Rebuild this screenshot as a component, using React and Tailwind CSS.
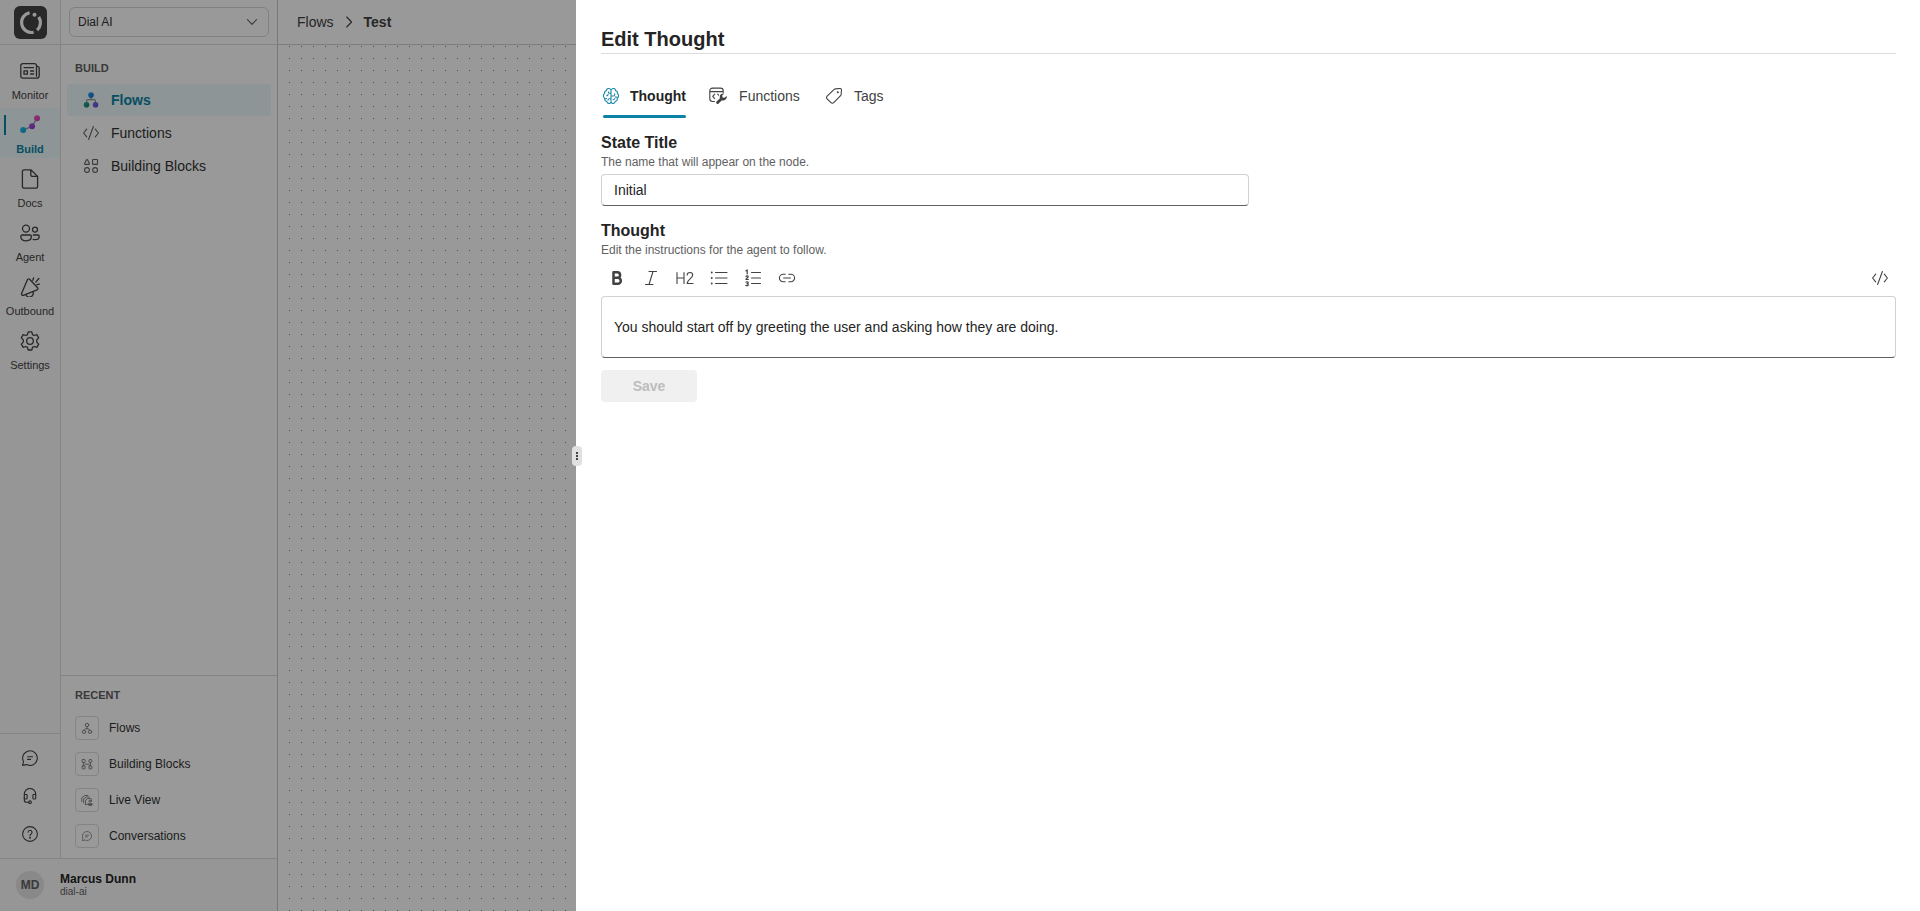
import React from "react";

function Icon({ size = "size-5", box = 20, width = 1.3, children, className = "" }) {
  return (
    <svg
      viewBox={`0 0 ${box} ${box}`}
      className={`${size} shrink-0 ${className}`}
      fill="none"
      stroke="currentColor"
      strokeWidth={width}
      strokeLinecap="round"
      strokeLinejoin="round"
      aria-hidden="true"
    >
      {children}
    </svg>
  );
}

const Logo = () => (
  <svg viewBox="0 0 33 33" className="size-[33px]" aria-hidden="true">
    <rect width="33" height="33" rx="6" fill="#444" />
    <g fill="none" stroke="#fff" strokeWidth="3.2">
      <path d="M15.600 6.700A10 10 0 0 0 19.600 26.300" />
      <path d="M24.700 11A10 10 0 0 1 23.100 24.100" />
    </g>
    <circle cx="20.500" cy="8.700" r="2" fill="#fff" />
  </svg>
);

const MonitorIcon = () => (
  <Icon>
    <path d="M16.5 15.2V4.6A2 2 0 0 0 14.5 2.6H2.8A2 2 0 0 0 .8 4.6v10.600a2 2 0 0 0 2 2H17a2.200 2.200 0 0 0 2.200-2.200V7a1.700 1.700 0 0 0-1.500-1.700" />
    <path d="M4 6.600h9.500M10.600 10h3M10.600 13h3" />
    <rect x="4" y="9.800" width="3.400" height="3.400" />
  </Icon>
);

const BuildIcon = () => (
  <svg viewBox="0 0 20 20" className="size-5" aria-hidden="true">
    <defs>
      <linearGradient id="bd1" x1="0" y1="0" x2="1" y2="1"><stop stopColor="#2cc0f0" /><stop offset="1" stopColor="#0a9fd0" /></linearGradient>
      <linearGradient id="bd2" x1="0" y1="0" x2="1" y2="1"><stop stopColor="#b455e0" /><stop offset="1" stopColor="#8038c8" /></linearGradient>
      <linearGradient id="bd3" x1="0" y1="0" x2="1" y2="1"><stop stopColor="#f05ab4" /><stop offset="1" stopColor="#cc3fbb" /></linearGradient>
    </defs>
    <path d="M3 15.200 12 11.200 17 3.300" fill="none" stroke="#8c8c9c" strokeWidth="1.200" />
    <circle cx="3.100" cy="15.100" r="3" fill="url(#bd1)" />
    <circle cx="12" cy="11.200" r="3" fill="url(#bd2)" />
    <circle cx="17" cy="3.200" r="3" fill="url(#bd3)" />
  </svg>
);

const DocsIcon = () => (
  <Icon>
    <path d="M10.800.8H4.200a1.800 1.800 0 0 0-1.800 1.800v14.800a1.800 1.800 0 0 0 1.800 1.800h11.600a1.800 1.800 0 0 0 1.800-1.800V7.400ZM10.800.9v4.900a1.600 1.600 0 0 0 1.600 1.600h5" />
  </Icon>
);

const AgentIcon = () => (
  <Icon>
    <circle cx="6" cy="5.600" r="3.500" />
    <circle cx="15" cy="6.600" r="2.500" />
    <path d="M2.300 12h7.500a1.600 1.600 0 0 1 1.600 1.600c0 2.600-2 4.200-5.300 4.200S.8 16.200.8 13.600A1.600 1.600 0 0 1 2.300 12Z" />
    <path d="M13.300 12h4.500a1.400 1.400 0 0 1 1.400 1.400c0 2-1.700 3.200-4.200 3.200-.7 0-1.300-.1-1.800-.3" />
  </Icon>
);

const OutboundIcon = () => (
  <Icon>
    <path d="M9.600 2.200 17.600 10.700a1.300 1.300 0 0 1-.5 2.100L3.300 18.300a1.300 1.300 0 0 1-1.700-1.700L7.500 2.600a1.300 1.300 0 0 1 2.100-.4Z" />
    <path d="M5.700 17.600a3.800 3.800 0 0 0 7.300-2.900M12.800 3.400l.8-2.600M15.800 5.100l3.100-3.600M16.800 7.700l2.600-.5" />
  </Icon>
);

const SettingsIcon = () => (
  <Icon>
    <circle cx="10" cy="10" r="3.300" />
    <path d="M8.200.9h3.600l.7 2.700 1.600.9 2.700-.8 1.900 3.200-2 2v2.200l2 2-1.900 3.200-2.700-.8-1.600.9-.7 2.600H8.200l-.7-2.600-1.600-.9-2.700.8-1.900-3.200 2-2V8.900l-2-2 1.900-3.200 2.700.8 1.600-.9Z" />
  </Icon>
);

const ChatIcon = ({ size = "size-4", width = 1.1 }) => (
  <Icon box={16} size={size} width={width}>
    <path d="M.6 15.400 1.500 11.500A7.300 7.300 0 1 1 4.600 14.600ZM5.600 6.700h5M5.600 9.400h3" />
  </Icon>
);

const HeadsetIcon = () => (
  <Icon box={16} size="size-4" width={1.1}>
    <path d="M2.300 7V6.200a5.700 5.700 0 0 1 11.400 0V7" />
    <rect x="2.300" y="6.500" width="2.800" height="4.500" rx=".8" />
    <rect x="10.900" y="6.500" width="2.800" height="4.500" rx=".8" />
    <path d="M2.300 9.500V12A2.300 2.300 0 0 0 4.600 14.300h2" />
    <circle cx="8" cy="14.200" r="1.300" />
  </Icon>
);

const HelpIcon = () => (
  <Icon box={16} size="size-4" width={1.1}>
    <circle cx="8" cy="8" r="7.400" />
    <path d="M6 6.300a2 2 0 1 1 3.100 1.700C8.300 8.500 8 8.900 8 9.700" />
    <circle cx="8" cy="11.700" r=".4" fill="currentColor" />
  </Icon>
);

const FlowsColorIcon = () => (
  <svg viewBox="0 0 16 16" className="size-4 shrink-0" aria-hidden="true">
    <defs>
      <linearGradient id="fl1" x1="0" y1="0" x2="1" y2="1"><stop stopColor="#2a9af0" /><stop offset="1" stopColor="#0f6fd4" /></linearGradient>
      <linearGradient id="fl2" x1="0" y1="0" x2="1" y2="1"><stop stopColor="#2aa98a" /><stop offset="1" stopColor="#177a5c" /></linearGradient>
      <linearGradient id="fl3" x1="0" y1="0" x2="1" y2="1"><stop stopColor="#7e6cf0" /><stop offset="1" stopColor="#5a44c8" /></linearGradient>
    </defs>
    <path d="M8 4v3.700M3.600 12V9A1.300 1.300 0 0 1 4.900 7.700h6.200A1.300 1.300 0 0 1 12.400 9v3" fill="none" stroke="#8f9a9c" strokeWidth="1.200" />
    <circle cx="8" cy="3.100" r="2.800" fill="url(#fl1)" />
    <circle cx="3.500" cy="12.800" r="2.800" fill="url(#fl2)" />
    <circle cx="12.500" cy="12.800" r="2.800" fill="url(#fl3)" />
  </svg>
);

const FlowsIcon = () => (
  <Icon box={16} size="size-3" width={1.3}>
    <circle cx="8" cy="4" r="2.300" />
    <circle cx="4" cy="13" r="2.200" />
    <circle cx="12" cy="13" r="2.200" />
    <path d="M8 6.500v2.200M4.500 10.500 6 9h4l1.500 1.500" />
  </Icon>
);

const CodeIcon = () => (
  <Icon box={16} size="size-4" width={1.1}>
    <path d="M3.700 4.200.6 8 3.700 11.800M12.300 4.200 15.400 8 12.300 11.800M10.400 1.500 5.600 14.500" />
  </Icon>
);

const BlocksIcon = () => (
  <Icon box={16} size="size-4" width={1.1}>
    <path d="M3.500 1.700a.6.600 0 0 1 1 0L6.400 5.500a.6.600 0 0 1-.5.900H2.100a.6.600 0 0 1-.5-.9Z" />
    <rect x="9.600" y="1.500" width="4.900" height="4.900" rx=".7" />
    <circle cx="4" cy="12" r="2.400" />
    <circle cx="12.100" cy="12" r="2.400" />
  </Icon>
);

const RecentBlocksIcon = () => (
  <Icon box={16} size="size-3" width={1.3}>
    <rect x="1.500" y="2" width="4" height="4" rx="1" />
    <rect x="10.500" y="2" width="4" height="4" rx="1.800" />
    <rect x="1.500" y="10.500" width="4" height="4" rx="1" />
    <rect x="10.500" y="10.500" width="4" height="4" rx="1" />
    <path d="M3.500 6v4.500M12.500 6v4.500M5.500 8.300h5" />
  </Icon>
);

const LiveIcon = () => (
  <Icon box={16} size="size-3" width={1.2}>
    <path d="M1 10V5l4-3h4M3.500 12V6.500l3.500-2.500h4M6 14V8l3-2h3.500A1.500 1.500 0 0 1 14 7.500V9M6 14h2" />
    <circle cx="12" cy="9.500" r="1.500" />
    <path d="M9.500 13h5.500v.8c0 1-1.200 1.700-2.800 1.700s-2.700-.7-2.700-1.700Z" fill="currentColor" />
  </Icon>
);

const Chevron = ({ d }) => (
  <Icon box={12} size="size-3" width={1.1}>
    <path d={d} />
  </Icon>
);

const BrainIcon = () => (
  <Icon box={16} size="size-4" width={1.1} className="text-[#1a86a8]">
    <path d="M8 2.200C7.500 1 6.600.5 5.600.5c-1.400 0-2.200 1-2.200 2.300C2 3 1.400 4 1.700 5.300.7 6 .4 7 .5 8.200c.1 1 .6 1.800 1.300 2.200-.3 1.600.5 2.800 1.900 3 .4 1.300 1.200 2.100 2.400 2.100 1 0 1.700-.6 1.900-1.600C8.200 14.900 8.900 15.500 9.900 15.500c1.200 0 2-.8 2.400-2.100 1.400-.2 2.200-1.400 1.900-3 .7-.4 1.200-1.200 1.300-2.200.1-1.200-.2-2.200-1.200-2.900.3-1.300-.3-2.300-1.700-2.500C12.600 1.500 11.800.5 10.400.5 9.400.5 8.500 1 8 2.200ZM8 2.200v11.700M8 5.200H6.700a1.300 1.300 0 0 1-1.300-1.300M8 10.800H6.300c-.8 0-1.300.5-1.300 1.300M8 8h2.300c.9 0 1.400-.6 1.400-1.500V5.700M1.800 10.400c.5.300 1.100.4 1.700.2M3.600 7.800c.9 0 1.500-.6 1.500-1.500M10 11.800c.9.100 1.600-.4 1.800-1.300M12.300 8.800c.6.500 1.200.5 1.700.2" />
  </Icon>
);

const ToolIcon = () => (
  <Icon box={18} size="size-[18px]" width={1.1}>
    <path d="M5.500 14.500H3.500A2.700 2.700 0 0 1 .8 11.800V3.800A2.700 2.700 0 0 1 3.500 1.100h8A2.700 2.700 0 0 1 14.200 3.800V5.500M.8 4.600h13.400M5.700 7.200 3.700 9.400l2 2.200M8.700 7.200l.9 1" />
    <path d="M17.600 9a3.500 3.500 0 0 1-4.600 4.200l-3.400 3.400a1.400 1.400 0 0 1-2-2l3.400-3.400a3.500 3.500 0 0 1 4.200-4.600L13.200 8.600l.4 1.800 1.800.4Z" fill="currentColor" stroke="none" />
  </Icon>
);

const TagIcon = () => (
  <Icon box={16} size="size-4" width={1.1}>
    <path d="M9.400.9 14 .5a1.400 1.400 0 0 1 1.500 1.500l-.4 4.600a1.800 1.800 0 0 1-.5 1.100l-6.900 7a1.900 1.900 0 0 1-2.700 0L1.100 10.900a1.900 1.900 0 0 1 0-2.700L8.200 1.400A1.800 1.800 0 0 1 9.400.9Z" />
    <circle cx="11.800" cy="4.200" r=".5" fill="currentColor" />
  </Icon>
);

const railItems = [
  { label: "Monitor", icon: MonitorIcon },
  { label: "Build", icon: BuildIcon, active: true },
  { label: "Docs", icon: DocsIcon },
  { label: "Agent", icon: AgentIcon },
  { label: "Outbound", icon: OutboundIcon },
  { label: "Settings", icon: SettingsIcon },
];

const buildItems = [
  { label: "Flows", icon: FlowsColorIcon, active: true },
  { label: "Functions", icon: CodeIcon },
  { label: "Building Blocks", icon: BlocksIcon },
];

const recentItems = [
  { label: "Flows", icon: <FlowsIcon /> },
  { label: "Building Blocks", icon: <RecentBlocksIcon /> },
  { label: "Live View", icon: <LiveIcon /> },
  { label: "Conversations", icon: <ChatIcon size="size-[10px]" width={1.3} /> },
];

function Rail() {
  return (
    <nav aria-label="Main" className="flex w-[61px] shrink-0 flex-col border-r border-[#dcdcdc] bg-[#fbfbfb]">
      <a href="#home" aria-label="Home" className="flex h-[45px] items-center justify-center border-b border-[#dcdcdc]">
        <Logo />
      </a>
      <div className="flex flex-1 flex-col gap-1 pt-[9px]">
        {railItems.map(({ label, icon: Glyph, active }) => (
          <a
            key={label}
            href={`#${label.toLowerCase()}`}
            className={`relative flex h-[50px] flex-col items-center gap-1.5 pt-[7px] text-[11px] leading-4 ${
              active ? "bg-[#ebf8fa] font-bold text-[#0a84a5]" : "text-[#424242]"
            }`}
          >
            {active && <span className="absolute top-[7px] left-1 h-5 w-0.5 bg-[#0a84a5]" />}
            <Glyph />
            {label}
          </a>
        ))}
      </div>
      <div className="flex flex-col border-t border-[#dcdcdc] py-[5px] text-[#424242]">
        {[["Feedback", ChatIcon], ["Support", HeadsetIcon], ["Help", HelpIcon]].map(([label, Glyph]) => (
          <button key={label} type="button" aria-label={label} className="flex h-[38px] items-center justify-center">
            <Glyph />
          </button>
        ))}
      </div>
    </nav>
  );
}

function SubNav() {
  return (
    <div className="flex min-w-0 flex-1 flex-col">
      <div className="flex h-[45px] items-center border-b border-[#dcdcdc] px-2">
        <div className="relative w-full">
          <select
            aria-label="Workspace"
            className="h-[30px] w-full appearance-none rounded-md border border-[#d6d6d6] bg-transparent px-2 text-xs text-[#333]"
          >
            <option>Dial AI</option>
          </select>
          <span className="pointer-events-none absolute inset-y-0 right-[11px] flex items-center text-[#616161]">
            <Chevron d="M1.500 3.700 6 8.300 10.500 3.700" />
          </span>
        </div>
      </div>
      <nav aria-label="Build" className="flex flex-1 flex-col px-1.5 pt-[15px]">
        <h2 className="mb-2 px-2 text-[11px] leading-4 font-bold text-[#616161]">BUILD</h2>
        <div className="flex flex-col gap-px">
          {buildItems.map(({ label, icon: Glyph, active }) => (
            <a
              key={label}
              href={`#${label}`}
              className={`flex h-8 items-center gap-3 rounded px-4 text-sm ${
                active ? "bg-[#ebf8fa] font-bold text-[#0a84a5]" : "text-[#333]"
              }`}
            >
              <span className={active ? "" : "text-[#616161]"}><Glyph /></span>
              {label}
            </a>
          ))}
        </div>
      </nav>
      <nav aria-label="Recent" className="border-t border-[#dcdcdc] px-3.5 pt-[11px] pb-2.5">
        <h2 className="mb-[13px] text-[11px] leading-4 font-bold text-[#616161]">RECENT</h2>
        <div className="flex flex-col gap-3">
          {recentItems.map(({ label, icon }) => (
            <a key={label} href={`#${label}`} className="flex items-center gap-2.5 text-xs text-[#333]">
              <span className="flex size-6 items-center justify-center rounded border border-[#dcdcdc] text-[#808080]">{icon}</span>
              {label}
            </a>
          ))}
        </div>
      </nav>
    </div>
  );
}

function Sidebar() {
  return (
    <aside className="flex w-[278px] shrink-0 flex-col border-r border-[#c8c8c8]">
      <div className="flex flex-1">
        <Rail />
        <SubNav />
      </div>
      <div className="flex h-[53px] items-center gap-4 border-t border-[#dcdcdc] bg-[#fafafa] px-4">
        <span className="flex size-7 items-center justify-center rounded-full bg-[#e4e4e4] text-xs font-bold text-[#616161]">MD</span>
        <div>
          <p className="text-xs leading-[13px] font-bold text-[#242424]">Marcus Dunn</p>
          <p className="text-[10px] leading-[11px] text-[#616161]">dial-ai</p>
        </div>
      </div>
    </aside>
  );
}

function Canvas() {
  return (
    <main className="flex min-w-0 flex-1 flex-col">
      <nav aria-label="Breadcrumb" className="flex h-[45px] items-center border-b border-[#d0d0d0] px-[19px] text-sm text-[#424242]">
        <a href="#flows">Flows</a>
        <span className="flex w-[30px] justify-center"><Chevron d="M3.700 1 8.600 6 3.700 11" /></span>
        <span aria-current="page" className="font-bold text-[#424242]">Test</span>
      </nav>
      <svg className="w-full flex-1" aria-hidden="true">
        <defs>
          <pattern id="grid" width="12" height="12" patternUnits="userSpaceOnUse">
            <rect x="11" y="1" width="1" height="1" fill="#808080" />
          </pattern>
        </defs>
        <rect width="100%" height="100%" fill="url(#grid)" />
      </svg>
    </main>
  );
}

const tabs = [
  { label: "Thought", icon: BrainIcon, active: true },
  { label: "Functions", icon: ToolIcon },
  { label: "Tags", icon: TagIcon },
];

const tools = [
  ["Bold", <path d="M6.500 4.200h3.800a2.800 2.800 0 0 1 0 5.600H6.500ZM6.500 9.800h4.300a3 3 0 0 1 0 6H6.500Z" strokeWidth="2.500" />],
  ["Italic", <path d="M8 3.500h7.500M4.500 16.500H12M12 3.500 8 16.500" />],
  ["Heading 2", <path d="M2 4.500v11M9 4.500v11M2 10h7M12.200 7c0-1.500 1.200-2.500 2.800-2.500s2.700 1 2.700 2.600c0 3.400-5.600 4.400-5.600 8.400h5.900" />],
  ["Bulleted list", <><path d="M6.500 4.500h11.500M6.500 10h11.500M6.500 15.500h11.500" /><path d="M2.700 4.500h.1M2.700 10h.1M2.700 15.500h.1" strokeWidth="1.800" /></>],
  ["Numbered list", <><path d="M8.500 4.500h9M8.500 10h9M8.500 15.500h9" /><path d="M3 2.800 4.200 2v3.800M3 8.600c.3-1 2.300-.9 2.200.3C5.100 9.800 3 10.400 3 11.500h2.300M3 14.200c.7-.7 2.200-.3 2.200.6 0 .6-.5.900-1.100.9.700 0 1.200.4 1.200 1 0 1-1.600 1.300-2.400.6" strokeWidth="1.200" /></>],
  ["Link", <path d="M8.200 6.200H6.200a3.800 3.800 0 0 0 0 7.600h2M11.800 6.200h2a3.800 3.800 0 0 1 0 7.600h-2M6.600 10h6.800" />],
];

function Drawer() {
  return (
    <section
      role="dialog"
      aria-label="Edit Thought"
      className="absolute inset-y-0 right-0 w-[70%] bg-white pt-[25px] pr-6 pl-[25px] text-[#242424]"
    >
      <button
        type="button"
        aria-label="Resize panel"
        className="absolute top-1/2 -left-1 flex h-5 w-2.5 -translate-y-1/2 flex-col items-center justify-center gap-px rounded bg-[#e0e0e0]"
      >
        <span className="size-0.5 bg-[#424242]" />
        <span className="size-0.5 bg-[#424242]" />
        <span className="size-0.5 bg-[#424242]" />
      </button>

      <h1 className="border-b border-[#dcdcdc] text-xl leading-7 font-bold">Edit Thought</h1>

      <div role="tablist" className="mt-6 flex gap-[23px] pl-0.5">
        {tabs.map(({ label, icon: Glyph, active }) => (
          <button
            key={label}
            type="button"
            role="tab"
            aria-selected={!!active}
            className={`relative flex h-10 items-center gap-[9px] pb-1 text-sm ${active ? "font-bold" : "text-[#424242]"}`}
          >
            <span className="flex w-[18px]"><Glyph /></span>
            <span
              data-label={label}
              className="flex flex-col items-center after:invisible after:h-0 after:overflow-hidden after:font-bold after:content-[attr(data-label)]"
            >
              {label}
            </span>
            {active && <span className="absolute inset-x-0 bottom-0 h-[3px] rounded-full bg-[#0a84a5]" />}
          </button>
        ))}
      </div>

      <form onSubmit={(e) => e.preventDefault()}>
        <label htmlFor="title" className="mt-3.5 block text-base leading-[22px] font-bold">State Title</label>
        <p className="text-xs leading-4 text-[#616161]">The name that will appear on the node.</p>
        <input
          id="title"
          type="text"
          defaultValue="Initial"
          className="mt-1 block h-8 w-1/2 rounded border border-[#d1d1d1] border-b-[#616161] px-3 text-sm"
        />

        <label htmlFor="thought" className="mt-3.5 block text-base leading-[22px] font-bold">Thought</label>
        <p className="text-xs leading-4 text-[#616161]">Edit the instructions for the agent to follow.</p>
        <div role="toolbar" aria-label="Formatting" className="mt-1 mb-0.5 flex gap-0.5 text-[#424242]">
          {tools.map(([label, glyph]) => (
            <button key={label} type="button" aria-label={label} className="flex h-8 w-8 items-center justify-center">
              <Icon width={1.1}>{glyph}</Icon>
            </button>
          ))}
          <button type="button" aria-label="View source" className="ml-auto flex h-8 w-8 items-center justify-center">
            <CodeIcon />
          </button>
        </div>
        <textarea
          id="thought"
          rows={1}
          defaultValue="You should start off by greeting the user and asking how they are doing."
          className="block h-[62px] w-full resize-none rounded border border-[#d1d1d1] border-b-[#616161] px-3 py-5 text-sm"
        />
        <button type="submit" disabled className="mt-3 h-8 w-24 rounded bg-[#f0f0f0] text-sm font-bold text-[#bdbdbd]">
          Save
        </button>
      </form>
    </section>
  );
}

export default function App() {
  return (
    <div className="relative flex h-screen overflow-hidden bg-white font-['Liberation_Sans',Arial,sans-serif]">
      <Sidebar />
      <Canvas />
      <div className="absolute inset-0 bg-black/40" />
      <Drawer />
    </div>
  );
}
